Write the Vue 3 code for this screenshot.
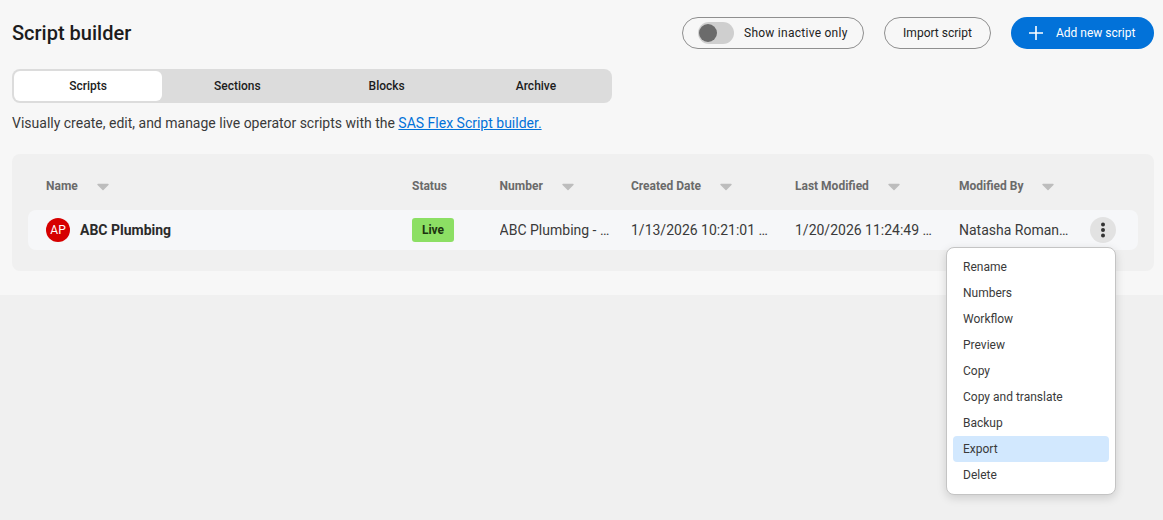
<script setup>
const tabs = ['Scripts', 'Sections', 'Blocks', 'Archive']
const columns = ['Name', 'Status', 'Number', 'Created Date', 'Last Modified', 'Modified By']
const menu = ['Rename', 'Numbers', 'Workflow', 'Preview', 'Copy', 'Copy and translate', 'Backup', 'Export', 'Delete']
</script>

<template>
  <div class="page">
    <section class="panel">
      <header class="top">
        <h1>Script builder</h1>
        <div class="actions">
          <div class="pill toggle">
            <span class="track"><span class="thumb"></span></span>
            <span>Show inactive only</span>
          </div>
          <button class="pill import">Import script</button>
          <button class="add">
            <svg width="16" height="16" viewBox="0 0 16 16"><path d="M8 1v14M1 8h14" stroke="#fff" stroke-width="1.6" fill="none" /></svg>
            <span>Add new script</span>
          </button>
        </div>
      </header>

      <nav class="tabs">
        <div v-for="(t, i) in tabs" :key="t" class="tab" :class="{ active: i === 0 }">{{ t }}</div>
      </nav>

      <p class="intro">Visually create, edit, and manage live operator scripts with the <a href="#">SAS Flex Script builder.</a></p>

      <div class="card">
        <div class="grid head">
          <div v-for="(c, i) in columns" :key="c" class="hcell">
            <span class="hlabel">{{ c }}</span>
            <svg v-if="i !== 1" class="caret" width="14" height="8" viewBox="0 0 14 8"><path d="M2 1.5h10L7 6.5z" fill="#bdbdbd" stroke="#bdbdbd" stroke-width="1.4" stroke-linejoin="round" /></svg>
          </div>
        </div>
        <div class="grid row">
          <div class="namecell">
            <span class="avatar">AP</span>
            <span class="name">ABC Plumbing</span>
          </div>
          <div><span class="badge">Live</span></div>
          <div class="cell">ABC Plumbing - Main Line</div>
          <div class="cell">1/13/2026 10:21:01 AM EST</div>
          <div class="cell">1/20/2026 11:24:49 AM EST</div>
          <div class="cell">Natasha Romanova</div>
          <div class="more">
            <svg width="26" height="26" viewBox="0 0 26 26"><circle cx="13" cy="13" r="13" fill="#e2e2e2" /><circle cx="13" cy="7.5" r="2" fill="#333" /><circle cx="13" cy="13" r="2" fill="#333" /><circle cx="13" cy="18.5" r="2" fill="#333" /></svg>
          </div>
        </div>
      </div>

      <ul class="menu">
        <li v-for="m in menu" :key="m" :class="{ hover: m === 'Export' }">{{ m }}</li>
      </ul>
    </section>
  </div>
</template>

<style>
html, body { margin: 0; background: #f0f0f0; }
</style>

<style scoped>
.page {
  height: 520px;
  background: #f0f0f0;
  font-family: Roboto, "Liberation Sans", sans-serif;
  color: #2b2b2b;
  overflow: hidden;
}
.panel {
  position: relative;
  box-sizing: border-box;
  height: 295px;
  padding: 17px 9px 0 12px;
  background: #f7f7f7;
}
.top {
  display: flex;
  justify-content: space-between;
  align-items: center;
  height: 32px;
}
h1 {
  margin: 0;
  font-size: 20px;
  font-weight: 500;
  color: #1c1c1c;
}
.actions { display: flex; gap: 20px; }
.pill {
  box-sizing: border-box;
  height: 32px;
  border: 1px solid #8f8f8f;
  border-radius: 16px;
  background: transparent;
  font: 400 12px Roboto, sans-serif;
  color: #222;
}
.toggle {
  display: flex;
  align-items: center;
  gap: 10px;
  width: 182px;
  padding-left: 15px;
  letter-spacing: 0.26px;
}
.track {
  display: flex;
  align-items: center;
  width: 36px;
  height: 22px;
  border-radius: 11px;
  background: #cfcfcf;
}
.thumb {
  width: 18px;
  height: 18px;
  margin-left: 1px;
  border-radius: 50%;
  background: #6b6b6b;
}
.import { width: 107px; padding: 0; }
.add {
  display: flex;
  align-items: center;
  gap: 12px;
  box-sizing: border-box;
  width: 143px;
  height: 32px;
  padding: 0 0 0 17px;
  border: 0;
  border-radius: 16px;
  background: #0272d9;
  color: #fff;
  font: 400 12px Roboto, sans-serif;
}
.tabs {
  display: grid;
  grid-template-columns: repeat(4, 148px);
  gap: 1.33px;
  box-sizing: border-box;
  width: 600px;
  height: 34px;
  margin-top: 20px;
  padding: 2px;
  border-radius: 8px;
  background: #dcdcdc;
}
.tab {
  display: flex;
  align-items: center;
  justify-content: center;
  border-radius: 6px;
  font-size: 12px;
  font-weight: 500;
  color: #1c1c1c;
}
.tab.active { background: #fff; }
.intro {
  margin: 11px 0 0;
  font-size: 14px;
  line-height: 18px;
  color: #3a3a3a;
}
.intro a { color: #0272d9; }
.card {
  box-sizing: border-box;
  height: 117px;
  margin-top: 22px;
  padding: 0 16px;
  border-radius: 8px;
  background: #f0f0f0;
}
.grid {
  display: grid;
  grid-template-columns: 366px 87.6px 131.4px 164px 164px 131px 1fr;
  align-items: center;
  padding-left: 18px;
}
.head { box-sizing: border-box; height: 56px; padding-top: 8px; }
.hcell { display: flex; align-items: center; gap: 18px; }
.hlabel {
  font-size: 12px;
  font-weight: 700;
  color: #6a6a6a;
}
.caret { display: block; margin-top: 2px; }
.row {
  height: 40px;
  border-radius: 8px;
  background: #f6f7f9;
}
.namecell { display: flex; align-items: center; gap: 10px; }
.avatar {
  display: flex;
  align-items: center;
  justify-content: center;
  width: 24px;
  height: 24px;
  border-radius: 50%;
  background: #d60000;
  color: #fff;
  font-size: 12px;
}
.name { font-size: 14px; font-weight: 700; color: #2b2b2b; }
.badge {
  display: inline-flex;
  align-items: center;
  justify-content: center;
  width: 42px;
  height: 24px;
  border-radius: 3px;
  background: #8cdf64;
  color: #1c3310;
  font-size: 12px;
  font-weight: 700;
}
.cell {
  overflow: hidden;
  padding-right: 20px;
  font-size: 14px;
  color: #3a3a3a;
  white-space: nowrap;
  text-overflow: ellipsis;
}
.more { display: flex; justify-content: flex-end; padding-right: 22px; }
.more svg { display: block; }
.menu {
  position: absolute;
  top: 247px;
  left: 946px;
  box-sizing: border-box;
  width: 170px;
  height: 248px;
  margin: 0;
  padding: 6px;
  border: 1px solid #c4c4c4;
  border-radius: 8px;
  background: #fff;
  box-shadow: 0 3px 10px rgba(0, 0, 0, 0.15);
  list-style: none;
}
.menu li {
  box-sizing: border-box;
  height: 26px;
  padding-left: 10px;
  border-radius: 4px;
  font-size: 12px;
  line-height: 26px;
  color: #3a3a3a;
}
.menu li.hover { background: #d2e8fe; }
</style>
